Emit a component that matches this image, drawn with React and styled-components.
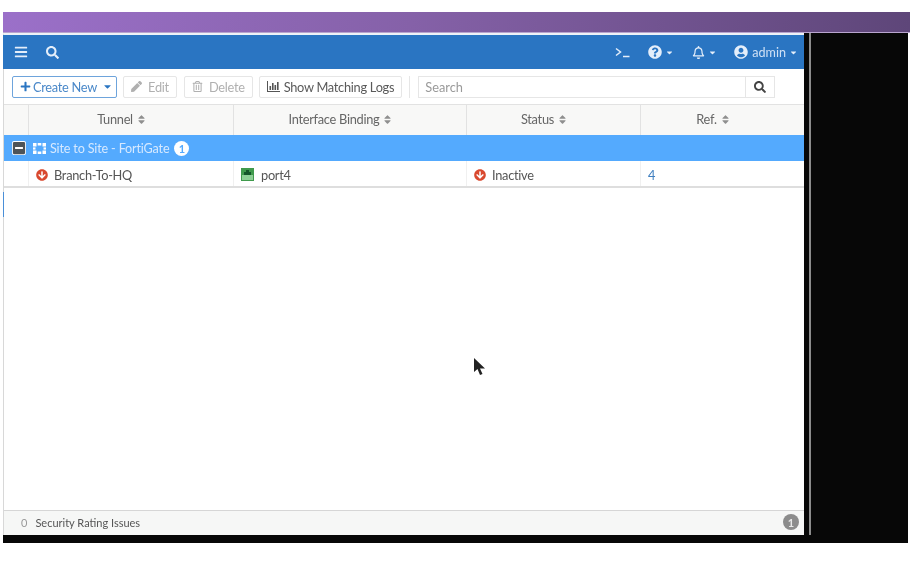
import React from 'react'
import styled, { createGlobalStyle } from 'styled-components'
import {
  FaArrowCircleDown,
  FaBars,
  FaCaretDown,
  FaMinusSquare,
  FaPen,
  FaPlus,
  FaQuestionCircle,
  FaRegBell,
  FaRegTrashAlt,
  FaSearch,
  FaSort,
  FaUserCircle,
} from 'react-icons/fa'

const GlobalStyle = createGlobalStyle`
  html, body {
    margin: 0;
    padding: 0;
    background: #fff;
  }
  body {
    font-family: Lato, "Open Sans", sans-serif;
    font-size: 12.8px;
    letter-spacing: -0.28px;
    color: #555;
    overflow: hidden;
  }
`

const Page = styled.div`
  position: relative;
  width: 915px;
  height: 563px;
  padding: 12px 5px 0 3px;
  box-sizing: border-box;
  filter: blur(0.45px);
`
const Banner = styled.div`
  height: 20px;
  width: 907px;
  background: linear-gradient(90deg, #9b70c9 0%, #8561a8 45%, #5e4679 100%);
  border-bottom: 1px solid #b9a5cf;
`
const Desktop = styled.div`
  display: flex;
  width: 905px;
  height: 510px;
  background: #070707;
`
const Window = styled.div`
  display: flex;
  flex-direction: column;
  width: 800px;
  height: 500px;
  border-top: 2px solid #eef2f7;
  border-left: 1px solid #d8d8d8;
  background: #fff;
`
const Divider = styled.div`
  width: 2px;
  height: 502px;
  margin-left: 5px;
  background: #8c8c8c;
`
const TopBar = styled.div`
  display: flex;
  align-items: center;
  height: 34px;
  flex: none;
  margin-left: -1px;
  padding: 0 6px 0 11px;
  background: #2a75c2;
  color: #e4eefa;
`
const TopIcon = styled.span`
  display: inline-flex;
  align-items: center;
  margin-right: ${p => p.$gap || 0}px;
  font-size: ${p => p.$size || 14}px;
`
const Spacer = styled.div`
  flex: 1;
`
const UserName = styled.span`
  margin-left: 4px;
  font-size: 12.6px;
  letter-spacing: 0;
  color: #cfe0f5;
`
const Caret = styled(FaCaretDown)`
  margin-left: 3px;
  font-size: 9px;
`
const Toolbar = styled.div`
  display: flex;
  align-items: center;
  height: 35px;
  flex: none;
  padding-left: 8px;
`
const Button = styled.div`
  display: flex;
  align-items: center;
  gap: ${p => p.$inner ?? 6}px;
  height: 22px;
  padding: 0 ${p => p.$padEnd ?? p.$pad ?? 7}px 0 ${p => p.$pad ?? 7}px;
  margin-right: ${p => p.$gap ?? 7}px;
  box-sizing: border-box;
  border: 1px solid ${p => (p.$primary ? '#6ea4dc' : '#e6e6e6')};
  border-radius: 2px;
  color: ${p => (p.$primary ? '#4a88c9' : p.$disabled ? '#b0b0b0' : '#5a5a5a')};
  white-space: nowrap;
  svg {
    font-size: 11px;
    color: ${p => (p.$primary ? '#2a75c2' : p.$disabled ? '#b0b0b0' : '#555')};
  }
`
const ToolSep = styled.div`
  width: 1px;
  height: 22px;
  margin-right: 8px;
  background: #e6e6e6;
`
const SearchBox = styled.div`
  display: flex;
  align-items: center;
  width: 357px;
  height: 22px;
  box-sizing: border-box;
  border: 1px solid #e6e6e6;
  color: #9a9a9a;
  letter-spacing: 0;
`
const SearchText = styled.span`
  flex: 1;
  padding-left: 6px;
`
const SearchIcon = styled.span`
  display: flex;
  align-items: center;
  justify-content: center;
  width: 28px;
  height: 100%;
  border-left: 1px solid #e6e6e6;
  color: #444;
  font-size: 12px;
`
const Grid = styled.div`
  display: grid;
  grid-template-columns: 25px 205px 233px 174px 1fr;
  flex: none;
`
const HeaderRow = styled(Grid)`
  height: 31px;
  background: #f8f8f7;
  border-top: 1px solid #e2e2e2;
  box-sizing: border-box;
`
const HeaderCell = styled.div`
  display: flex;
  align-items: center;
  justify-content: center;
  gap: 3px;
  padding: 0 18px 2px 0;
  border-right: 1px solid #e2e2e2;
  color: #666;
  svg {
    font-size: 11px;
    color: #8f8f8f;
  }
  &:last-child {
    border-right: 0;
  }
`
const GroupRow = styled.div`
  display: flex;
  align-items: center;
  height: 26px;
  flex: none;
  padding-left: 8px;
  background: #54aafe;
  color: #d6e9ff;
  font-size: 12.6px;
  letter-spacing: -0.16px;
`
const GroupToggle = styled(FaMinusSquare)`
  margin-right: 7px;
  font-size: 14px;
  color: #4d5459;
  background: #fff;
  border-radius: 2px;
`
const GroupName = styled.span`
  margin-left: 4px;
`
const Count = styled.span`
  display: inline-flex;
  align-items: center;
  justify-content: center;
  width: ${p => p.$size || 15}px;
  height: ${p => p.$size || 15}px;
  margin-left: ${p => p.$gap || 0}px;
  border-radius: 50%;
  background: ${p => p.$bg || '#fff'};
  color: ${p => p.$color || '#54aafe'};
  font-size: 11px;
  font-weight: 700;
`
const DataRow = styled(Grid)`
  height: 27px;
  border-bottom: 2px solid #dedede;
  box-sizing: border-box;
`
const DataCell = styled.div`
  display: flex;
  align-items: center;
  gap: ${p => p.$inner ?? 6}px;
  padding: 2px 0 0 ${p => p.$pad ?? 7}px;
  border-right: 1px solid #f0f0f0;
  color: ${p => p.$color || '#555'};
  &:last-child {
    border-right: 0;
  }
`
const StatusIcon = styled(FaArrowCircleDown)`
  font-size: 12px;
  color: #d9492f;
`
const Body = styled.div`
  position: relative;
  flex: 1;
`
const Tick = styled.div`
  position: absolute;
  left: -1px;
  top: 4px;
  width: 1px;
  height: 25px;
  background: #4a8fd8;
`
const Footer = styled.div`
  display: flex;
  align-items: center;
  justify-content: space-between;
  height: 25px;
  flex: none;
  padding: 0 5px 2px 17px;
  background: #f6f7f6;
  border-top: 1px solid #d6d6d6;
  box-sizing: border-box;
  font-size: 11px;
  letter-spacing: 0;
  color: #555;
`
const FooterZero = styled.span`
  margin-right: 8px;
  color: #999;
`
const Pointer = styled.svg`
  position: absolute;
  left: 474px;
  top: 358px;
`

function PortIcon() {
  return (
    <svg width="13" height="13" viewBox="0 0 13 13">
      <rect width="13" height="13" fill="#3f9a4c" />
      <rect x="1" y="7" width="11" height="5" fill="#8ccf95" />
      <path d="M3 7V4h2V2h3v2h2v3z" fill="#14562a" />
    </svg>
  )
}

function TerminalIcon() {
  return (
    <svg width="15" height="11" viewBox="0 0 15 11" fill="none" stroke="currentColor" strokeWidth="1.5">
      <path d="M1 1.5 5.5 5 1 8.5" />
      <path d="M8 9.5h6.5" />
    </svg>
  )
}

function GroupIcon() {
  return (
    <svg width="13" height="11" viewBox="0 0 13 11" fill="#fff">
      <rect x="0" y="0" width="3.5" height="3.5" />
      <rect x="4.7" y="0" width="3.6" height="2.5" />
      <rect x="9.5" y="0" width="3.5" height="3.5" />
      <rect x="0" y="4.4" width="2.5" height="2.2" />
      <rect x="10.5" y="4.4" width="2.5" height="2.2" />
      <rect x="0" y="7.5" width="3.5" height="3.5" />
      <rect x="4.7" y="8.5" width="3.6" height="2.5" />
      <rect x="9.5" y="7.5" width="3.5" height="3.5" />
    </svg>
  )
}

function LogsIcon() {
  return (
    <svg width="13" height="11" viewBox="0 0 13 11" fill="#555">
      <path d="M0 0h1v10h12v1H0z" />
      <path d="M2.5 5h1.6v4H2.5zM5 2h1.6v7H5zM7.5 4h1.6v5H7.5zM10 1h1.6v8H10z" />
    </svg>
  )
}

const columns = ['Tunnel', 'Interface Binding', 'Status', 'Ref.']

function App() {
  return (
    <Page>
      <GlobalStyle />
      <Banner />
      <Desktop>
        <Window>
          <TopBar>
            <TopIcon $size={14} $gap={18}>
              <FaBars />
            </TopIcon>
            <TopIcon $size={13}>
              <FaSearch />
            </TopIcon>
            <Spacer />
            <TopIcon $gap={18}>
              <TerminalIcon />
            </TopIcon>
            <TopIcon $gap={18}>
              <FaQuestionCircle />
              <Caret />
            </TopIcon>
            <TopIcon $size={13} $gap={17}>
              <FaRegBell />
              <Caret />
            </TopIcon>
            <TopIcon>
              <FaUserCircle />
              <UserName>admin</UserName>
              <Caret />
            </TopIcon>
          </TopBar>

          <Toolbar>
            <Button $primary $pad={7} $padEnd={3} $inner={2} $gap={6}>
              <FaPlus />
              Create New
              <Caret />
            </Button>
            <Button $disabled>
              <FaPen />
              Edit
            </Button>
            <Button $disabled $gap={6}>
              <FaRegTrashAlt />
              Delete
            </Button>
            <Button $pad={7} $inner={4}>
              <LogsIcon />
              Show Matching Logs
            </Button>
            <ToolSep />
            <SearchBox>
              <SearchText>Search</SearchText>
              <SearchIcon>
                <FaSearch />
              </SearchIcon>
            </SearchBox>
          </Toolbar>

          <HeaderRow>
            <HeaderCell />
            {columns.map(name => (
              <HeaderCell key={name}>
                {name}
                <FaSort />
              </HeaderCell>
            ))}
          </HeaderRow>

          <GroupRow>
            <GroupToggle />
            <GroupIcon />
            <GroupName>Site to Site - FortiGate</GroupName>
            <Count $gap={5}>1</Count>
          </GroupRow>

          <DataRow>
            <DataCell />
            <DataCell>
              <StatusIcon />
              Branch-To-HQ
            </DataCell>
            <DataCell $inner={7}>
              <PortIcon />
              port4
            </DataCell>
            <DataCell>
              <StatusIcon />
              Inactive
            </DataCell>
            <DataCell $color="#3f7fc0">4</DataCell>
          </DataRow>

          <Body>
            <Tick />
          </Body>

          <Footer>
            <span>
              <FooterZero>0</FooterZero>
              Security Rating Issues
            </span>
            <Count $size={16} $bg="#8c8c8c" $color="#e8e8e8">
              1
            </Count>
          </Footer>
        </Window>
        <Divider />
      </Desktop>
      <Pointer width="12" height="18" viewBox="0 0 12 18">
        <path d="M0 0v14l3.5-3 2.5 6 2.5-1-2.5-5.6H11z" fill="#222" />
      </Pointer>
    </Page>
  )
}

export default App
